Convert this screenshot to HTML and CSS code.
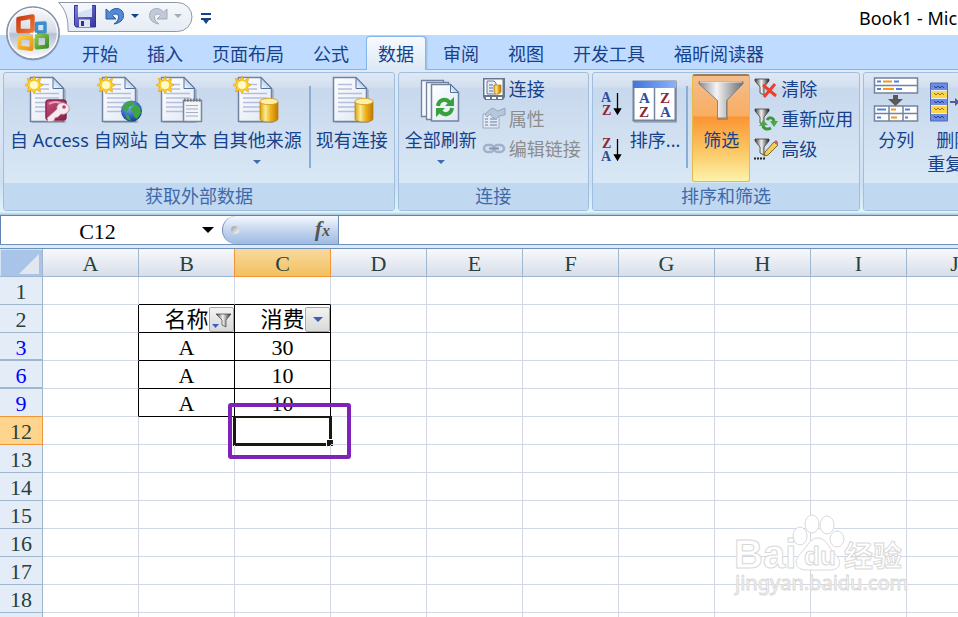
FILE: index.html
```html
<!DOCTYPE html>
<html lang="zh-CN">
<head>
<meta charset="utf-8">
<title>Book1</title>
<link rel="stylesheet" href="styles.css">
</head>
<body>
<svg class="defs" aria-hidden="true">
  <defs>
    <linearGradient id="gPage" x1="0" y1="0" x2="1" y2="1"><stop offset="0" stop-color="#fff"/><stop offset="1" stop-color="#dfe7f5"/></linearGradient>
    <linearGradient id="gFold" x1="0" y1="1" x2="1" y2="0"><stop offset="0" stop-color="#fff"/><stop offset="1" stop-color="#7fa0d0"/></linearGradient>
    <linearGradient id="gGold" x1="0" x2="1"><stop offset="0" stop-color="#d8a010"/><stop offset=".3" stop-color="#fbeb90"/><stop offset=".6" stop-color="#eeb01c"/><stop offset="1" stop-color="#c07a04"/></linearGradient>
    <linearGradient id="gSteel" x1="0" x2="1"><stop offset="0" stop-color="#8a8a8a"/><stop offset=".4" stop-color="#f4f4f4"/><stop offset=".7" stop-color="#b0b0b0"/><stop offset="1" stop-color="#6e6e6e"/></linearGradient>
    <linearGradient id="gDark" x1="0" x2="1"><stop offset="0" stop-color="#3c3c3c"/><stop offset=".45" stop-color="#f2f2f2"/><stop offset="1" stop-color="#222"/></linearGradient>
    <linearGradient id="gRose" x1="0" y1="0" x2="1" y2="1"><stop offset="0" stop-color="#c8527f"/><stop offset="1" stop-color="#8c1c45"/></linearGradient>
    <radialGradient id="gSea" cx=".4" cy=".3" r=".8"><stop offset="0" stop-color="#86b2ee"/><stop offset=".6" stop-color="#2c62bd"/><stop offset="1" stop-color="#12337c"/></radialGradient>
    <linearGradient id="gOrb" x1="0" y1="0" x2="0" y2="1"><stop offset="0" stop-color="#fafbfd"/><stop offset=".48" stop-color="#d5dbe7"/><stop offset=".52" stop-color="#b3bfd4"/><stop offset="1" stop-color="#fff"/></linearGradient>
    <linearGradient id="gQat" x1="0" y1="0" x2="0" y2="1"><stop offset="0" stop-color="#f5f8fb"/><stop offset="1" stop-color="#e6ecf4"/></linearGradient>
    <linearGradient id="gDisk" x1="0" y1="0" x2="1" y2="1"><stop offset="0" stop-color="#7c7fe0"/><stop offset="1" stop-color="#37359b"/></linearGradient>
    <linearGradient id="gBlueHead" x1="0" x2="1"><stop offset="0" stop-color="#4374dc"/><stop offset="1" stop-color="#8bb2fa"/></linearGradient>
    <linearGradient id="gRed" x1="0" y1="0" x2="1" y2="1"><stop offset="0" stop-color="#c63a16"/><stop offset="1" stop-color="#f0742c"/></linearGradient>
    <linearGradient id="gYellow" x1="0" y1="0" x2="1" y2="1"><stop offset="0" stop-color="#f9c93c"/><stop offset="1" stop-color="#ee9414"/></linearGradient>
    <linearGradient id="gGreen" x1="0" y1="0" x2="1" y2="1"><stop offset="0" stop-color="#8cc63e"/><stop offset="1" stop-color="#3d8f28"/></linearGradient>
    <symbol id="page" viewBox="0 0 48 48">
      <path d="M7 3H29L41 14V47H7z" fill="#5c6c88" opacity=".3"/>
      <path d="M5.500 1.500H28L38.500 12.500V45.500H5.500z" fill="url(#gPage)" stroke="#71839f" stroke-width="1.500"/>
      <path d="M28 1.500V12.500H38.500z" fill="url(#gFold)" stroke="#52729e"/>
      <path d="M10 8.500H24M10 13H24M10 17.500H34M10 22H34M10 26.500H34M10 31H34M10 35.500H34" stroke="#b5bfda" stroke-width="1.500"/>
    </symbol>
    <symbol id="spark" viewBox="0 0 48 48">
      <path d="M9 0l2 5L15.500 2l-1 5L18 9l-3.500 2 1 5L11 13.500 9 18l-2-4.500L2.500 16l1-5L0 9l3.500-2-1-5L7 5z" fill="#f9d02c" stroke="#e9a80c" stroke-width=".8"/>
      <circle cx="9" cy="9" r="4" fill="#fffbc8"/>
    </symbol>
    <symbol id="drum" viewBox="0 0 48 48">
      <path d="M27 26v17c0 4 18 4 18 0V26z" fill="url(#gGold)" stroke="#b57a0c" stroke-width=".7"/>
      <ellipse cx="36" cy="25.500" rx="9" ry="3.200" fill="#fdf0a0" stroke="#cb9420" stroke-width=".8"/>
    </symbol>
    <symbol id="funnel" viewBox="0 0 24 24">
      <path d="M1 2h14v2l-5 6v8l-4-2v-6L1 4z" fill="url(#gDark)" stroke="#3f3f3f" stroke-width=".8"/>
    </symbol>
    <symbol id="drop" viewBox="0 0 8 4"><path d="M0 0H8L4 4z" fill="currentColor"/></symbol>
  </defs>
</svg>

<div class="app">
  <header class="titlebar">
    <div class="quick">
      <svg class="quick-bg" viewBox="0 0 136 32" aria-hidden="true"><path d="M1 2.500H120a14.500 14.500 0 0 1 0 29H10.500C11 19 8 9 1 2.500z" fill="url(#gQat)" stroke="#8e98a8"/></svg>
      <button class="q" aria-label="保存"><svg width="24" height="24" viewBox="0 0 24 24"><path d="M1.500 1.500H22.500V23H3L1.500 21z" fill="url(#gDisk)" stroke="#34328c"/><path d="M5 1h14v12H5z" fill="#f1f5fc"/><path d="M5 9l14-5v9H5z" fill="#d5e1f5"/><path d="M6 15.500h11V23H6z" fill="#dfe4f3"/><path d="M8 17h3v5H8z" fill="#34328c"/></svg></button>
      <button class="q undo" aria-label="撤销"><svg width="20" height="20" viewBox="0 0 20 20"><path d="M1 3v10h10L7.500 9.500c3-3 7-1 6 2.500-.5 2.500-2 4-4.500 6 6-1 9.500-4 9.500-8.500C18.500 2 9.500 0 4.500 6z" fill="#5589d2" stroke="#2859a8"/></svg></button>
      <button class="q caret" aria-label="撤销列表"><svg width="8" height="4"><use href="#drop"/></svg></button>
      <button class="q redo" aria-label="恢复" disabled><svg width="20" height="20" viewBox="0 0 20 20"><path d="M19 3v10H9l3.500-3.500c-3-3-7-1-6 2.500.5 2.500 2 4 4.500 6-6-1-9.500-4-9.500-8.500C1.500 2 10.500 0 15.500 6z" fill="#c1cad6" stroke="#a3aebd"/></svg></button>
      <button class="q caret off" aria-label="恢复列表" disabled><svg width="8" height="4"><use href="#drop"/></svg></button>
    </div>
    <button class="q more" aria-label="自定义快速访问工具栏"><svg width="10" height="12" viewBox="0 0 10 12"><path d="M0 0h10v2H0zM0 5h10v2H8l-3 4-3-4H0z" fill="#15428b"/></svg></button>
    <h1 class="doc-title">Book1 - Microsoft Excel</h1>
  </header>
  <button class="orb" aria-label="Office">
    <svg width="56" height="56" viewBox="0 0 56 56">
      <circle cx="28" cy="28.500" r="27" fill="#55657e" opacity=".45"/>
      <circle cx="28" cy="28" r="26" fill="url(#gOrb)" stroke="#8794ab" stroke-width="1.500"/>
      <circle cx="28" cy="28" r="24.500" fill="none" stroke="#fff" stroke-width="1.500" opacity=".8"/>
      <g fill="none" stroke-linejoin="round">
        <path d="M13.500 14l14-2.500v14.500h-14z" stroke="url(#gRed)" stroke-width="4.500"/>
        <path d="M31.500 18.500l8.500-.5v9h-8.500z" stroke="#3b8ed0" stroke-width="3.500"/>
        <path d="M14.500 33h12v11l-12-1.500z" stroke="url(#gYellow)" stroke-width="4"/>
        <path d="M31.500 31h10.500v10.500l-10.500 1z" stroke="url(#gGreen)" stroke-width="4"/>
        <path d="M25 28.500h7M29 26.500v7" stroke="#fff" stroke-width="1.500"/>
      </g>
    </svg>
  </button>

  <nav class="tabs">
    <button>开始</button><button>插入</button><button>页面布局</button><button>公式</button><button class="active">数据</button><button>审阅</button><button>视图</button><button>开发工具</button><button>福昕阅读器</button>
  </nav>

  <div class="ribbon">
    <section class="group">
      <div class="tools">
        <button class="big"><svg class="ico" viewBox="0 0 48 48"><use href="#page"/><use href="#spark"/><rect x="21" y="24" width="20" height="20" rx="3" fill="url(#gRose)" stroke="#8d2148" stroke-width="1.500"/><path d="M24 28c5-3 10-2 13 0" stroke="#e6a1bd" stroke-width="2" fill="none"/><path d="M23 46l-1-4 10-9c-1-4 3-7 7-6s7 5 4 9c-2 2-5 3-7 2l-3 3-3 1-1 3z" fill="#f8e9ee" stroke="#ad7d90" stroke-width=".8"/><circle cx="39" cy="31" r="1.800" fill="#b5426e"/></svg>自 Access</button>
        <button class="big"><svg class="ico" viewBox="0 0 48 48"><use href="#page"/><use href="#spark"/><circle cx="34.500" cy="35" r="10.500" fill="url(#gSea)"/><path d="M27 29c3-4 8-5 10-3l-2 4-3 1-1 4-4-1-2-1zM38 28l5 3 1 6-4 6-3-2-1-5-3-3 3-2zM28 38l4 2 2 5-4-2z" fill="#3da63e"/></svg>自网站</button>
        <button class="big"><svg class="ico" viewBox="0 0 48 48"><use href="#page"/><use href="#spark"/><path d="M27.500 24.500h18v21h-18z" fill="#f1f4f8" stroke="#7c889a" stroke-width="1.500"/><path d="M28 24h18" stroke="#777" stroke-width="3" stroke-dasharray="1.500 1.500"/><path d="M30 29.500h12M30 33h12M30 36.500h12M30 40h12" stroke="#a5adc0"/></svg>自文本</button>
        <button class="big"><svg class="ico" viewBox="0 0 48 48"><use href="#page"/><use href="#spark"/><use href="#drum"/></svg>自其他来源<svg class="down" width="8" height="4"><use href="#drop"/></svg></button>
        <span class="sep"></span>
        <button class="big"><svg class="ico" viewBox="0 0 48 48"><use href="#page"/><use href="#drum"/></svg>现有连接</button>
      </div>
      <h2>获取外部数据</h2>
    </section>

    <section class="group">
      <div class="tools">
        <button class="big"><svg class="ico" viewBox="0 0 48 48"><g fill="#f5f8fd" stroke="#71839f" stroke-width="1.300"><path d="M4.500 4.500h22v36h-22z"/><path d="M9.500 6.500h22v37h-22z"/></g><path d="M14.500 8.500h19l8 8v28.500h-27z" fill="url(#gPage)" stroke="#71839f" stroke-width="1.500"/><path d="M33.500 8.500v8h8z" fill="url(#gFold)" stroke="#52729e"/><g fill="none" stroke="#37a13c" stroke-width="4"><path d="M21 30c1-7 8-8 12-3"/><path d="M35 32c-1 7-8 8-12 3"/></g><path d="M37 21v9H28zM19 41v-9H28z" fill="#37a13c"/></svg>全部刷新<svg class="down" width="8" height="4"><use href="#drop"/></svg></button>
        <div class="stack">
          <button class="small"><svg viewBox="0 0 24 24"><path d="M1 1h22v19l-2 3H3l-2-3z" fill="#65768d"/><path d="M2.500 2.500h18V18h-18z" fill="#fafcff"/><path d="M5 4h7l2 2v11H5z" fill="#e5ebf5" stroke="#62789a"/><path d="M7 8h4M7 11h4M7 14h4" stroke="#4b71a8"/><path d="M12 8h7v7c-2 3-5 3-7 0z" fill="url(#gGold)" stroke="#a56d0e" stroke-width=".6"/><path d="M4 20h4v2H4zM10 20h4v2h-4zM16 20h4v2h-4z" fill="#fff"/></svg>连接</button>
          <button class="small" disabled><svg viewBox="0 0 24 24"><path d="M1 7h16v14H1z" fill="#e3eaf4" stroke="#9babc2"/><path d="M3 12h3M8 12h7M3 15h3M8 15h7M3 18h3M8 18h7" stroke="#8fa2bd" stroke-width="1.500"/><path d="M3 7l7-6 6 3 7-3v7l-6 1-3 3-3-1-3-4-3 3z" fill="#b8c6da" stroke="#96a7c1"/></svg>属性</button>
          <button class="small" disabled><svg viewBox="0 0 24 24"><g fill="none" stroke="#a3b0c9" stroke-width="2.500"><rect x="2" y="8" width="10" height="7" rx="3.500"/><rect x="12" y="8" width="10" height="7" rx="3.500"/></g><path d="M7 11.500h10" stroke="#8493b1" stroke-width="2"/></svg>编辑链接</button>
        </div>
      </div>
      <h2>连接</h2>
    </section>

    <section class="group sorting">
      <div class="tools">
        <div class="orders">
          <button aria-label="升序"><svg width="22" height="26" viewBox="0 0 22 26"><text class="letter blue" x="0" y="11">A</text><text class="letter red" x="1" y="24">Z</text><path d="M16.500 2v20M13.500 18l3 5 3-5z" stroke="#000" stroke-width="1.300"/></svg></button>
          <button aria-label="降序"><svg width="22" height="26" viewBox="0 0 22 26"><text class="letter red" x="1" y="11">Z</text><text class="letter blue" x="0" y="24">A</text><path d="M16.500 2v20M13.500 18l3 5 3-5z" stroke="#000" stroke-width="1.300"/></svg></button>
        </div>
        <button class="big"><svg class="ico" viewBox="0 0 48 48"><path d="M3 6h43v41H3z" fill="#68788e" opacity=".4"/><path d="M2.500 5.500h42v39h-42z" fill="#fff" stroke="#74849c" stroke-width="2"/><path d="M2 5h43v7H2z" fill="url(#gBlueHead)"/><path d="M23.500 12v32" stroke="#74849c" stroke-width="1.500"/><g class="sort-letters"><text class="blue" x="8" y="27">A</text><text class="red" x="8" y="41">Z</text><text class="red" x="29" y="27">Z</text><text class="blue" x="29" y="41">A</text></g></svg>排序...</button>
        <span class="sep"></span>
        <button class="big pressed"><svg class="ico" viewBox="0 0 48 48"><path d="M2 6h45L31 24v20H20V24z" fill="#8b4c12" opacity=".35"/><path d="M2 5.500h44V8L29.500 24.500V42h-9V24.500L2 8z" fill="url(#gSteel)" stroke="#858585"/><path d="M3 6h42" stroke="#eee"/></svg>筛选</button>
        <div class="stack">
          <button class="small"><svg viewBox="0 0 24 24"><use href="#funnel"/><path d="M9 8l13 11M21 7L10 20" stroke="#ee4029" stroke-width="3"/></svg>清除</button>
          <button class="small"><svg viewBox="0 0 24 24"><use href="#funnel"/><g fill="none" stroke="#3d943a" stroke-width="3"><path d="M13 13c2-3 6-3 7 1"/><path d="M17 21c-4 2-8 1-8-3"/></g><path d="M16 14h8l-4 6zM5 19l4-6 5 5z" fill="#4ba944"/></svg>重新应用</button>
          <button class="small"><svg viewBox="0 0 24 24"><use href="#funnel"/><path d="M10 19l1-4L20 5l4 3-10 10z" fill="#f0d05c" stroke="#806525"/><path d="M20 5l4 3 1-2-3-3z" fill="#d95f52"/><path d="M0 21.500h12" stroke="#222" stroke-width="2" stroke-dasharray="2 1"/></svg>高级</button>
        </div>
      </div>
      <h2>排序和筛选</h2>
    </section>

    <section class="group last">
      <div class="tools">
        <button class="big"><svg class="ico" viewBox="0 0 48 48"><g fill="#fff" stroke="#74849c" stroke-width="1.500"><path d="M2.500 2h43v15h-43zM2.500 30h43v15h-43z"/><path d="M2.500 9.500h43M2.500 37.500h43M17 30v15M31 30v15"/></g><path d="M5 5.500h4M22 5.500h5M5 13h4M24 13h6M5 33.500h9M33 33.500h5M5 41.500h4M33 41.500h3" stroke="#4d82e4" stroke-width="2"/><path d="M11 5.500h9M11 13h11M19 33.500h5M19 41.500h6" stroke="#f39a18" stroke-width="2"/><path d="M21 19h5v4h5l-7.500 7L16 23h5z" fill="#595959"/></svg>分列</button>
        <button class="big"><svg class="ico" viewBox="0 0 48 48"><path d="M.5 7h17v38H.5z" fill="#6d8ce0" stroke="#5169ae"/><path d="M1 15h16v7H1zM1 30h16v7H1z" fill="#fbd54e"/><path d="M1 14.500h16M1 22.500h16M1 29.500h16M1 37.500h16" stroke="#e6ecfb"/><path d="M4 10l2 2 2-2 2 2 2-2 2 2M4 25l2 2 2-2 2 2 2-2 2 2M4 40l2 2 2-2 2 2 2-2 2 2" stroke="#233f91" fill="none"/><path d="M4 17l2 2 2-2 2 2 2-2 2 2M4 32l2 2 2-2 2 2 2-2 2 2" stroke="#9d7314" fill="none"/><path d="M20 25h5v-3l5 4-5 4v-3h-5z" fill="#4d6290"/><path d="M32 7h15v38H32z" fill="#6d8ce0"/></svg>删除<br>重复项</button>
      </div>
      <div class="caption"></div>
    </section>
  </div>

  <div class="formula-bar">
    <div class="name-box"><input aria-label="名称框" value="C12"><button aria-label="名称列表"><svg width="12" height="6" viewBox="0 0 8 4"><use href="#drop"/></svg></button></div>
    <div class="fx"><span class="grip"></span><button aria-label="插入函数">f<span>x</span></button></div>
    <input class="formula" aria-label="编辑栏">
  </div>

  <main class="sheet">
    <table>
      <thead><tr><th class="corner"><svg width="20" height="20" viewBox="0 0 20 20"><path d="M20 0V20H0z" fill="#e2e6ee"/></svg></th><th>A</th><th>B</th><th class="on">C</th><th>D</th><th>E</th><th>F</th><th>G</th><th>H</th><th>I</th><th>J</th></tr></thead>
      <tbody>
        <tr><th>1</th><td></td><td class="kb"></td><td class="kb"></td><td></td><td></td><td></td><td></td><td></td><td></td><td></td></tr>
        <tr><th>2</th><td class="kr"></td><td class="k">名称<button class="filter" aria-label="筛选名称"><svg width="20" height="20" viewBox="0 0 20 20"><path d="M4 4h15l-5 6v7l-4-2v-5z" fill="url(#gDark)" stroke="#444" stroke-width=".7"/><path d="M0 14h7l-3.500 4z" fill="#3e5fba"/></svg></button></td><td class="k">消费<button class="filter" aria-label="筛选消费"><svg width="10" height="5" viewBox="0 0 8 4"><use href="#drop"/></svg></button></td><td></td><td></td><td></td><td></td><td></td><td></td><td></td></tr>
        <tr><th class="hit fold">3</th><td class="kr"></td><td class="k">A</td><td class="k">30</td><td></td><td></td><td></td><td></td><td></td><td></td><td></td></tr>
        <tr><th class="hit fold">6</th><td class="kr"></td><td class="k">A</td><td class="k">10</td><td></td><td></td><td></td><td></td><td></td><td></td><td></td></tr>
        <tr><th class="hit above">9</th><td class="kr"></td><td class="k">A</td><td class="k">10</td><td></td><td></td><td></td><td></td><td></td><td></td><td></td></tr>
        <tr><th class="on">12</th><td></td><td></td><td class="current"><span class="cursor"></span><span class="mark"></span></td><td></td><td></td><td></td><td></td><td></td><td></td><td></td></tr>
        <tr><th>13</th><td></td><td></td><td></td><td></td><td></td><td></td><td></td><td></td><td></td><td></td></tr>
        <tr><th>14</th><td></td><td></td><td></td><td></td><td></td><td></td><td></td><td></td><td></td><td></td></tr>
        <tr><th>15</th><td></td><td></td><td></td><td></td><td></td><td></td><td></td><td></td><td></td><td></td></tr>
        <tr><th>16</th><td></td><td></td><td></td><td></td><td></td><td></td><td></td><td></td><td></td><td></td></tr>
        <tr><th>17</th><td></td><td></td><td></td><td></td><td></td><td></td><td></td><td></td><td></td><td></td></tr>
        <tr><th>18</th><td></td><td></td><td></td><td></td><td></td><td></td><td></td><td></td><td></td><td></td></tr>
        <tr><th></th><td></td><td></td><td></td><td></td><td></td><td></td><td></td><td></td><td></td><td></td></tr>
      </tbody>
    </table>
    <svg class="watermark" width="176" height="90" viewBox="0 0 176 90">
      <g class="outline">
        <ellipse cx="66" cy="23" rx="7" ry="9"/><ellipse cx="78" cy="11" rx="7" ry="9"/><ellipse cx="93" cy="12" rx="7" ry="9"/><ellipse cx="103" cy="26" rx="7" ry="8"/>
        <path d="M84 25c8 0 10 9 17 16 8 8 5 16-5 16H73c-12 0-14-9-6-17 6-6 9-15 17-15z"/>
        <text class="brand" x="0" y="55">Bai</text><text class="du" x="70" y="52">du</text><text class="cn" x="110" y="54">经验</text>
        <text class="site" x="1" y="77">jingyan.baidu.com</text>
      </g>
    </svg>
  </main>
</div>
</body>
</html>
```
FILE: styles.css
```css
* { box-sizing: border-box; }
html, body { height: 100%; margin: 0; overflow: hidden; }
body { background: #fff; color: #15428b; font: 18px/24px "Noto Sans", "Noto Sans CJK SC", sans-serif; }
button { margin: 0; padding: 0; border: 0; background: none; color: inherit; font: inherit; white-space: nowrap; }
input { min-width: 0; padding: 0; border: 0; background: #fff; }
svg { display: block; flex: none; }
.defs { position: absolute; width: 0; height: 0; }
.app { position: relative; display: flex; flex-direction: column; height: 100%; overflow: hidden; }

/* Title bar */
.titlebar { display: flex; flex: none; align-items: flex-start; height: 35px; padding-left: 57px; }
.quick { position: relative; display: flex; align-items: center; height: 32px; padding: 0 12px 0 16px; }
.quick-bg { position: absolute; inset: 0; width: 100%; height: 100%; }
.q { position: relative; }
.undo { margin-left: 8px; }
.caret { margin-left: 6px; }
.redo { margin-left: 9px; }
.caret.off { color: #a8adb5; }
.more { margin: 13px 0 0 7px; }
.doc-title { width: 99px; margin: 0 0 0 auto; overflow: hidden; color: #000; font-size: 18px; font-weight: 400; line-height: 36px; white-space: nowrap; }
.orb { position: absolute; top: 5px; left: 5px; z-index: 2; }

/* Tabs */
.tabs { display: flex; flex: none; gap: 5px; height: 35px; padding: 1px 0 0 70px; border-bottom: 1px solid #8db2e3; background: #bfdbff; }
.tabs button { height: 34px; padding: 0 11px; border: 1px solid transparent; border-bottom: 0; }
.tabs .active { border-color: #86b6ee; border-radius: 4px 4px 0 0; background: linear-gradient(#f7fafe, #dde9f6); box-shadow: 1px 0 2px #94b8de; }

/* Ribbon */
.ribbon { display: flex; flex: none; gap: 3px; padding: 2px 0 4px 3px; overflow: hidden; background: linear-gradient(#e0eaf6, #cfe0f3 80%, #def5fa 98%, #a9bfdc); }
.group { display: flex; flex: none; flex-direction: column; border: 1px solid #a0bfdf; border-radius: 3px; background: linear-gradient(#dfe8f4, #d3dfef 14px, #c8d8ed 15px, #d9e8f5 110px); }
.group h2, .caption { height: 27px; margin: 0; background: #c1d8f1; color: #3e6aaa; font-size: 18px; font-weight: 400; line-height: 27px; text-align: center; }
.tools { display: flex; gap: 5px; height: 110px; padding: 1px 6px; }
.big { display: flex; flex-direction: column; align-items: center; padding-top: 2px; }
.ico { width: 48px; height: 48px; margin-bottom: 4px; }
.down { margin-top: 8px; color: #3f6dac; }
.sep { width: 4px; margin: 12px 0 14px; border-right: 2px solid #8cadd3; }
.stack { display: flex; flex-direction: column; padding-right: 1px; }
.small { display: flex; gap: 3px; align-items: center; height: 30px; }
.small svg { width: 24px; height: 24px; }
.small:disabled { color: #8d8d8d; }
.sorting .tools { gap: 4px; padding: 1px 5px 1px 8px; }
.orders { display: flex; flex-direction: column; gap: 20px; padding: 17px 3px 0 0; }
.letter { font: bold 14px "Liberation Serif", serif; }
.sort-letters { font: bold 15px "Liberation Serif", serif; }
.blue { fill: #2f4f9d; }
.red { fill: #8d2636; }
.pressed { width: 58px; padding-top: 0; border: 1px solid #e5bb45; border-top: 2px solid #9b7c58; border-radius: 3px; background: linear-gradient(#f3bd8c, #f9ad62 40px, #fb9433 41px, #fbc764 75px, #fdf1a8 104px); }
.last { flex: 1 0 auto; }
.last .tools { gap: 7px; padding: 1px 8px; }

/* Formula bar */
.formula-bar { display: flex; flex: none; height: 34px; border-top: 1px solid #5f84b3; border-bottom: 1px solid #6f91bb; background: linear-gradient(#fff 28px, #6f91bb 28px, #6f91bb 29px, #dfeaf7 29px); }
.formula-bar > * { height: 28px; }
.name-box { display: flex; width: 222px; padding-right: 8px; border-left: 1px solid #5f84b3; }
.name-box input { flex: 1; padding: 3px 8px 0 0; color: #000; font: 22px "Liberation Serif", serif; text-align: center; }
.name-box button { color: #000; }
.fx { display: flex; align-items: center; justify-content: space-between; width: 117px; padding: 0 8px; border: 1px solid #6f91bb; border-width: 0 1px; border-radius: 14px 0 0 14px; background: linear-gradient(#f5f9fe, #c5d6ef 50%, #9dbae3); }
.grip { width: 8px; height: 8px; border-radius: 4px; background: linear-gradient(135deg, #999, #fff); }
.fx button { color: #555; font: italic bold 22px/26px "Liberation Serif", serif; }
.fx span { font-size: 16px; }
.formula { flex: 1; }

/* Worksheet */
.sheet { position: relative; flex: 1; min-height: 0; overflow: hidden; }
table { width: 1003px; border-spacing: 0; table-layout: fixed; color: #000; font: 22px/24px "Liberation Serif", "Noto Sans CJK SC", serif; text-align: center; }
th, td { position: relative; height: 28px; padding: 3px 0 0; border: 0 solid #d0d7e5; border-width: 0 1px 1px 0; font-weight: 400; white-space: nowrap; }
thead th { border-color: #9eb6ce; background: linear-gradient(#f7f9fb, #d7deea); color: #27413e; }
tbody th { border-color: #9eb6ce; background: #e4ecf7; color: #27413e; }
.corner { width: 43px; border: 0 solid #9eb6ce; border-width: 0 1px 1px 0; background: #a9c4e9; box-shadow: inset 1px 1px #d5e3f4; }
.corner svg { margin: 0 3px 0 auto; }
thead .on { border-color: #f29536; background: linear-gradient(#f9d99f, #f1c15f); box-shadow: -1px 0 #f29536; }
tbody .on { border-color: #f29536; background: #ffd58d; }
tbody .hit { color: #00f; }
.fold { box-shadow: inset 0 -1px #9eb6ce; }
tbody .above { border-bottom-color: #f29536; }
.k { border-color: #000; }
.kb { border-bottom-color: #000; }
.kr { border-right-color: #000; }
.filter { position: absolute; right: 0; bottom: 0; display: flex; align-items: center; justify-content: center; width: 25px; height: 25px; border: 1px solid #93a8ca; border-radius: 2px; background: linear-gradient(#f3f3f1, #d8d9d8); color: #3e5fba; }
.cursor { position: absolute; inset: -1px -2px -2px; border: 3px solid #1d1712; border-top-width: 2px; }
.cursor::after { position: absolute; right: -5px; bottom: -4px; width: 6px; height: 6px; border: 1px solid #fff; background: #1d1712; content: ""; }
.mark { position: absolute; z-index: 1; inset: -14px -21px -15px -7px; border: 4px solid #7f22b8; border-radius: 3px; }
.watermark { position: absolute; right: 48px; bottom: 14px; font-family: "Noto Sans", "Noto Sans CJK SC", sans-serif; }
.outline { fill: #fff; stroke: #d9d9d9; stroke-width: 1; }
.brand { font: bold 40px "Liberation Sans", sans-serif; }
.du { font: bold 26px "Liberation Sans", sans-serif; }
.cn { font: bold 29px "Noto Sans CJK SC", sans-serif; }
.site { font: 20px "Noto Sans", sans-serif; }
```
